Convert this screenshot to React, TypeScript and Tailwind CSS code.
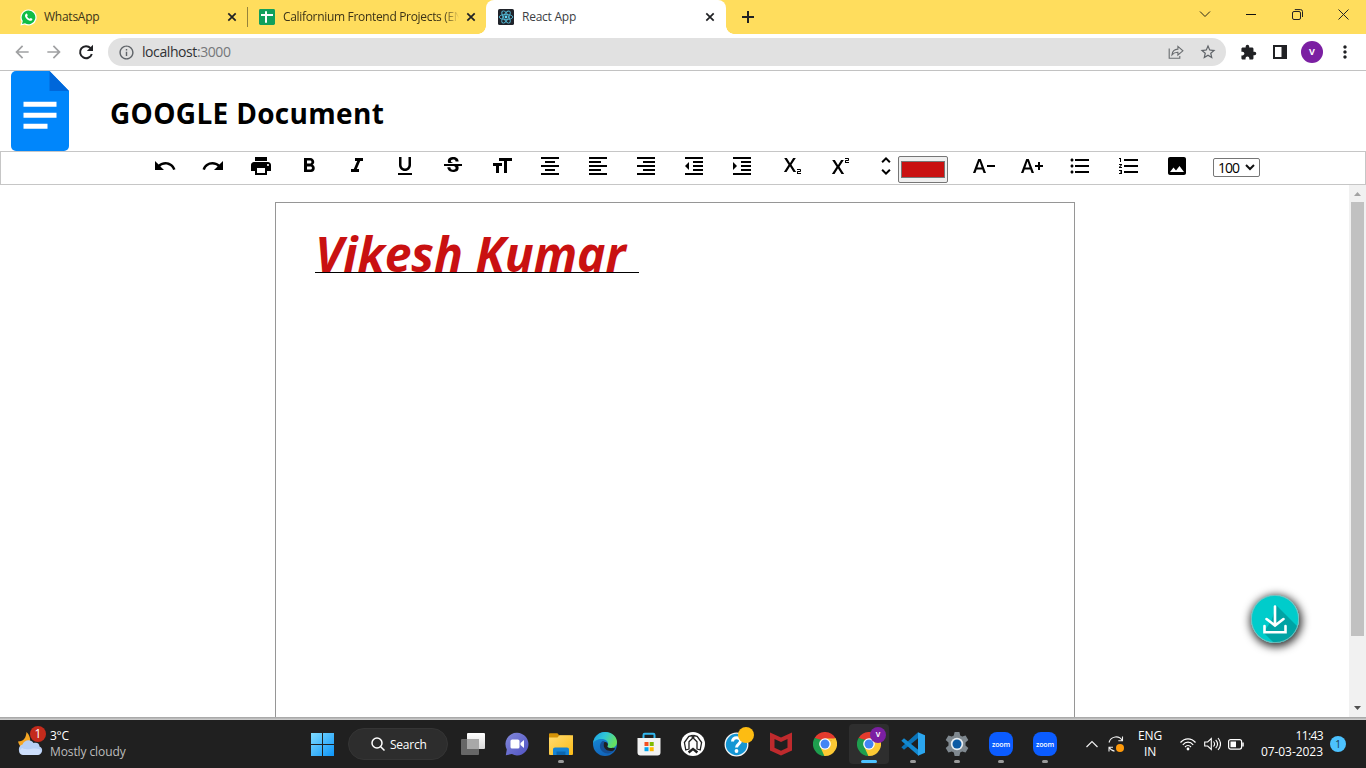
import React from "react";
import {
  MdUndo, MdRedo, MdPrint, MdFormatBold, MdFormatItalic, MdFormatUnderlined, MdStrikethroughS,
  MdFormatSize, MdFormatAlignCenter, MdFormatAlignLeft, MdFormatAlignRight, MdFormatIndentDecrease,
  MdFormatIndentIncrease, MdSubscript, MdSuperscript, MdUnfoldMore, MdTextDecrease, MdTextIncrease,
  MdFormatListBulleted, MdFormatListNumbered, MdImage, MdExtension, MdStarBorder, MdArrowBack,
  MdArrowForward, MdInfoOutline, MdMoreVert,
} from "react-icons/md";

const CloseX = () => (
  <svg width="10" height="10" viewBox="0 0 10 10" className="shrink-0">
    <path d="M1.3 1.3l7.4 7.4M8.7 1.3L1.3 8.7" stroke="#202124" strokeWidth="1.7" />
  </svg>
);

const SheetsIcon = () => (
  <svg width="16" height="16" viewBox="0 0 16 16" className="shrink-0">
    <rect width="16" height="16" rx="1.4" fill="#12a05c" />
    <path d="M2 6h12M7 2.2v11.6" stroke="#fff" strokeWidth="2" />
  </svg>
);

const ReactIcon = () => (
  <svg width="16" height="16" viewBox="0 0 16 16" className="shrink-0">
    <rect width="16" height="16" rx="1.6" fill="#20232a" />
    <g fill="none" stroke="#53b8d4" strokeWidth="0.9">
      <ellipse cx="8" cy="8" rx="6.8" ry="2.6" />
      <ellipse cx="8" cy="8" rx="6.8" ry="2.6" transform="rotate(60 8 8)" />
      <ellipse cx="8" cy="8" rx="6.8" ry="2.6" transform="rotate(120 8 8)" />
    </g>
    <circle cx="8" cy="8" r="1.4" fill="#61dafb" />
  </svg>
);

const WhatsAppIcon = () => (
  <span className="relative flex h-4 w-4 shrink-0 items-center justify-center">
    <svg width="17" height="17" viewBox="0 0 17 17" className="absolute">
      <path d="M8.6 0.4a8 8 0 1 1-3.9 15L0.4 16.6l1.2-4.2A8 8 0 0 1 8.6 0.4z" fill="#fff" />
      <path d="M8.6 1.6a6.8 6.8 0 1 1-3.6 12.6L2 15l.8-2.9A6.8 6.8 0 0 1 8.6 1.6z" fill="#10bd46" />
      <path d="M6 4.8c.5-.5 1-.3 1.2.2l.5 1.2c.1.4-.6.9-.6 1.2.5 1.1 1.4 1.9 2.5 2.4.4 0 .8-.9 1.2-.8l1.4.7c.5.3 0 1.5-.6 1.9-2.4 1.2-6.9-2.5-6.6-5.3.1-.6.5-1.2 1-1.5z" fill="#fff" />
    </svg>
  </span>
);

function BrowserTabs() {
  return (
    <div className="flex h-[34px] bg-[#ffdd5d] text-[12px] text-[#3c3317]">
      <div className="flex w-[247px] items-center pl-5 pr-[10px]">
        <WhatsAppIcon />
        <span className="ml-2 flex-1 whitespace-nowrap tracking-[-0.25px]">WhatsApp</span>
        <CloseX />
      </div>
      <div className="mt-[7px] h-5 w-px bg-[#96833b]" />
      <div className="flex w-[238px] items-center pl-[11px] pr-[10px]">
        <SheetsIcon />
        <span className="ml-2 mr-[3px] flex-1 whitespace-nowrap tracking-[-0.32px] [mask-image:linear-gradient(to_right,#000_89%,transparent_98%)]">
          Californium Frontend Projects (EN
        </span>
        <CloseX />
      </div>
      <div className="relative flex w-[240px] items-center rounded-t-[8px] bg-white pl-3 pr-[11px] text-[#3c4043]">
        <span className="absolute -left-2 bottom-0 h-2 w-2 bg-[radial-gradient(circle_at_0_0,transparent_7.5px,#fff_8px)]" />
        <ReactIcon />
        <span className="ml-2 flex-1 whitespace-nowrap tracking-[-0.25px]">React App</span>
        <CloseX />
        <span className="absolute -right-2 bottom-0 h-2 w-2 bg-[radial-gradient(circle_at_100%_0,transparent_7.5px,#fff_8px)]" />
      </div>
      <div className="flex flex-1 items-center pl-4">
        <svg width="12" height="12" viewBox="0 0 12 12">
          <path d="M6 0v12M0 6h12" stroke="#202124" strokeWidth="2" />
        </svg>
      </div>
      <div className="flex h-[28px] items-center pr-[17px]">
        <svg width="12" height="12" viewBox="0 0 12 12" className="mr-[35px]" fill="none" stroke="#2a2618">
          <path d="M1 3.5l5 5 5-5" />
        </svg>
        <svg width="10" height="12" viewBox="0 0 10 12" className="mr-9" stroke="#111">
          <path d="M0 6.5h10" />
        </svg>
        <svg width="11" height="11" viewBox="0 0 11 11" className="mr-[35px]" fill="none" stroke="#222">
          <rect x="0.5" y="2.5" width="8" height="8" rx="1.5" />
          <path d="M2.8 .6H8.5a2 2 0 0 1 2 2V8" />
        </svg>
        <svg width="11" height="11" viewBox="0 0 11 11" stroke="#222">
          <path d="M.5.5l10 10M10.5.5l-10 10" />
        </svg>
      </div>
    </div>
  );
}

function AddressBar() {
  return (
    <div className="flex h-[37px] items-center border-b border-[#c2c2c2] bg-white pl-3">
      <MdArrowBack size={20} color="#a0a1a3" />
      <MdArrowForward size={20} color="#a0a1a3" className="ml-3" />
      <svg width="20" height="20" viewBox="0 0 20 20" className="ml-3">
        <path d="M14.6 6.2A6 6 0 1 0 15.800 12" fill="none" stroke="#202124" strokeWidth="2" />
        <path d="M17 2.800v6.200h-6.200z" fill="#202124" />
      </svg>
      <div className="ml-3 flex h-7 w-[1118px] items-center rounded-full bg-[#e1e1e1] pl-[10px] pr-[9px]">
        <MdInfoOutline size={17} color="#5f6368" />
        <span className="-mt-px ml-[7px] flex-1 text-[14px] tracking-[-0.42px] text-[#303134]">
          localhost<span className="text-[#75777a]">:3000</span>
        </span>
        <svg width="16" height="16" viewBox="0 0 16 16" fill="none" stroke="#6a6d70" strokeWidth="1.1" className="mr-[15px]">
          <path d="M1.2 4.5v9.8h10.6v-2.2" />
          <path d="M4 10.8C4.4 7 6.4 5.2 9.9 5.1V2.4l5 4.4-5 4.2V8.3C7.4 8.2 5.6 9 4 10.8z" />
        </svg>
        <MdStarBorder size={18} color="#5f6368" />
      </div>
      <MdExtension size={17} color="#202124" className="ml-[14px]" />
      <svg width="14" height="14" viewBox="0 0 14 14" className="ml-4">
        <path d="M1 1h12v12H1z" fill="none" stroke="#202124" strokeWidth="2" />
        <path d="M8.5 0H14v14H8.5z" fill="#202124" />
      </svg>
      <span className="ml-[14px] flex h-[22px] w-[22px] items-center justify-center rounded-full bg-[#7b1fa2] text-[9px] font-bold text-white">
        V
      </span>
      <MdMoreVert size={20} color="#202124" className="ml-[11.5px]" />
    </div>
  );
}

function DocHeader() {
  return (
    <div className="flex h-20 items-center pl-[11px]">
      <svg width="58" height="80" viewBox="0 0 58 80">
        <path d="M5 0h33.5L58 20v55a5 5 0 0 1-5 5H5a5 5 0 0 1-5-5V5a5 5 0 0 1 5-5z" fill="#0086fb" />
        <path d="M38.5 0L58 20H38.5z" fill="#0067da" />
        <path d="M12.5 33.3h33M12.5 44.3h33M12.5 55.3h24" stroke="#fff" strokeWidth="5" />
      </svg>
      <h1 className="ml-[41px] mt-[3px] whitespace-nowrap text-[28px] font-bold leading-9 tracking-[0.32px] text-black">
        GOOGLE Document
      </h1>
    </div>
  );
}

const leftTools = [
  MdUndo, MdRedo, MdPrint, MdFormatBold, MdFormatItalic, MdFormatUnderlined, MdStrikethroughS, MdFormatSize,
  MdFormatAlignCenter, MdFormatAlignLeft, MdFormatAlignRight, MdFormatIndentDecrease, MdFormatIndentIncrease,
  MdSubscript, MdSuperscript,
];
const rightTools = [MdTextDecrease, MdTextIncrease, MdFormatListBulleted, MdFormatListNumbered, MdImage];

function Toolbar() {
  return (
    <div className="flex h-[34px] items-start border border-[#c6c6c6] pl-[152.2px] pt-[2px] text-black">
      <div className="flex gap-[24.06px]">
        {leftTools.map((Icon, i) => (
          <Icon key={i} size={24} />
        ))}
        <MdUnfoldMore size={24} />
      </div>
      <div className="-ml-[0.2px] mt-[2px] h-[27px] w-[50px] rounded-[2px] border border-[#767676] bg-[#efefef] px-[2px] py-1">
        <div className="h-full w-full border border-[#777] bg-[#c91111]" />
      </div>
      <div className="ml-6 flex gap-[24.3px]">
        {rightTools.map((Icon, i) => (
          <Icon key={i} size={24} />
        ))}
      </div>
      <div className="ml-6 mt-1 flex h-[19px] w-[47px] items-center justify-between rounded-[2px] border border-[#767676] pl-[4px] pr-1 font-['Open_Sans'] text-[14px] leading-none text-black">
        <span className="tracking-[-0.9px]">100</span>
        <svg width="10" height="7" viewBox="0 0 10 7" fill="none" stroke="#111" strokeWidth="2">
          <path d="M1 1l4 4 4-4" />
        </svg>
      </div>
    </div>
  );
}

function Editor() {
  return (
    <div className="flex h-[532px] overflow-hidden">
      <div className="relative flex flex-1 pl-[275px] pt-[17px]">
        <div className="h-[600px] w-[800px] border border-[#969696] pl-[39px] pt-[23px]">
          <div className="h-[47px] w-[324px] whitespace-nowrap border-b border-black text-[48px] font-bold italic leading-[55px] tracking-[-0.05px] text-[#c91111]">
            Vikesh Kumar
          </div>
        </div>
        <div className="absolute left-[1251px] top-[410px] h-12 w-12 rounded-full shadow-[1px_2px_8px_2px_rgba(0,0,0,0.8)]">
          <svg width="48" height="48" viewBox="0 0 48 48">
            <defs>
              <clipPath id="disc"><circle cx="24" cy="24" r="24" /></clipPath>
            </defs>
            <g clipPath="url(#disc)">
              <rect width="48" height="48" fill="#00cccb" />
              <path d="M25.500 10.500L50 35v15H25L12.500 37.500l8-12z" fill="#00a3a4" />
            </g>
            <circle cx="24" cy="24" r="23.6" fill="none" stroke="#8bbcbb" strokeWidth=".8" />
            <path d="M24 11.500v18M15.500 24l8.500 6.500 8.500-6.500M13.500 31v6.300h21V31" fill="none" stroke="#fff" strokeWidth="2.600" strokeLinecap="round" />
          </svg>
        </div>
      </div>
      <div className="flex w-[17px] flex-col items-center bg-[#f1f1f1]">
        <svg width="17" height="17" viewBox="0 0 17 17">
          <path d="M5 11l3.5-4 3.5 4z" fill="#a3a3a3" />
        </svg>
        <div className="h-[434px] w-[13px] bg-[#c1c1c1]" />
        <div className="flex-1" />
        <svg width="17" height="17" viewBox="0 0 17 17">
          <path d="M5 6l3.5 4L12 6z" fill="#505050" />
        </svg>
      </div>
    </div>
  );
}

const ChromeLogo = () => (
  <svg width="24" height="24" viewBox="0 0 24 24">
    <path d="M12 12L1.6 6A12 12 0 0 1 22.4 6z" fill="#e33b2e" />
    <path d="M12 12L22.4 6A12 12 0 0 1 12 24z" fill="#fcc934" />
    <path d="M12 12v12A12 12 0 0 1 1.6 6z" fill="#1e9e4e" />
    <path d="M12 6.4h10.6a12 12 0 0 1 .2 .6L17 9z" fill="#fcc934" />
    <path d="M7.2 14.8L12 17.6l4.8-2.8L12 24a12 12 0 0 1-.6 0z" fill="#fcc934" />
    <path d="M1.6 6l5.4 9.2L9 8z" fill="#1e9e4e" />
    <circle cx="12" cy="12" r="5.8" fill="#fff" />
    <circle cx="12" cy="12" r="4.5" fill="#4285f4" />
  </svg>
);

const TaskViewLogo = () => (
  <svg width="24" height="24" viewBox="0 0 24 24">
    <defs><linearGradient id="tv" x2="0" y2="1"><stop stopColor="#fff" /><stop offset="1" stopColor="#d8d8d8" /></linearGradient></defs>
    <rect x="6" y="1" width="18" height="16" rx="1" fill="url(#tv)" />
    <rect x="0" y="7" width="18" height="16" rx="1" fill="#676767" />
    <path d="M6 7h12v10H6z" fill="#a8a8a8" />
  </svg>
);

const ChatLogo = () => (
  <svg width="24" height="24" viewBox="0 0 24 24">
    <defs><linearGradient id="ct" x2="1" y2="1"><stop stopColor="#8389d9" /><stop offset="1" stopColor="#5052c3" /></linearGradient></defs>
    <path d="M12 .8a11.3 11.3 0 1 1-5.1 21.3L.8 23.2l1-5.7A11.3 11.3 0 0 1 12 .8z" fill="url(#ct)" />
    <rect x="5.5" y="7.5" width="9" height="9" rx="1.6" fill="#fff" />
    <path d="M15.5 11l3.5-3v8l-3.5-3z" fill="#fff" />
  </svg>
);

const ExplorerLogo = () => (
  <svg width="24" height="24" viewBox="0 0 24 24">
    <defs><linearGradient id="fe" x2="1" y2="1"><stop stopColor="#ffdc73" /><stop offset="1" stopColor="#fcbb16" /></linearGradient></defs>
    <path d="M0 2.2C0 1.5.6 1.2 1.2 1.2h7.2l2 2.3h11v5H0z" fill="#d49206" />
    <path d="M0 5.5h8.5l2-2.3H24V22a1 1 0 0 1-1 1H1a1 1 0 0 1-1-1z" fill="url(#fe)" />
    <path d="M4 23v-5.500c0-1.300.8-2 2-2h12c1.200 0 2 .7 2 2V23z" fill="#1583d4" />
    <path d="M7.500 19.500h9V23h-9z" fill="#0c66ae" />
  </svg>
);

const EdgeLogo = () => (
  <svg width="24" height="24" viewBox="0 0 24 24">
    <defs>
      <linearGradient id="ea" x2="1" y2=".4"><stop stopColor="#1c9de2" /><stop offset=".5" stopColor="#2fc6d8" /><stop offset="1" stopColor="#65e162" /></linearGradient>
      <linearGradient id="eb" x2=".3" y2="1"><stop stopColor="#1791dc" /><stop offset="1" stopColor="#1267bc" /></linearGradient>
    </defs>
    <circle cx="12" cy="12" r="12" fill="url(#eb)" />
    <path d="M0 11.500C1 4.500 6 0 12 0c7 0 12 4.700 12 10 0 4-3 6-6 6-2.500 0-4.200-1-3.500-2 1.500-2 .5-5.500-3-6.500C7 6.200 1.500 8 0 11.500z" fill="url(#ea)" />
    <path d="M9 9.500c-3.500 3-2.600 9.500 3 11.500 3.500 1.200 7 0 9.500-3 .5-.5 0-1-.6-.7-4.500 2-9.500.2-10-4.300-.1-1.400.4-2.500 1-3.400-.8-.7-2-.8-2.900-.1z" fill="#164f94" />
    <path d="M11.200 10.200c1.600-.7 3.600.3 3.700 2.200 0 1-.8 1.500-.6 2.100.6 1.300 3.200 2 5.200 1.300l3 .7-2.500 2.200c-4.700 1.200-8.600-1-9.200-4.600-.2-1.500-.1-2.700.4-3.900z" fill="#202020" />
  </svg>
);

const StoreLogo = () => (
  <svg width="24" height="24" viewBox="0 0 24 24">
    <path d="M6.500 7V3c0-.8.500-1.200 1.200-1.200h8.600c.7 0 1.200.4 1.200 1.200v4" fill="none" stroke="#32b7ee" strokeWidth="2" />
    <path d="M.5 6h23v14.500a3 3 0 0 1-3 3h-17a3 3 0 0 1-3-3z" fill="#f2f2f2" />
    <path d="M7.500 10h4v4h-4z" fill="#f25022" /><path d="M12.700 10h4v4h-4z" fill="#7fba00" />
    <path d="M7.500 15.200h4v4h-4z" fill="#00a4ef" /><path d="M12.700 15.200h4v4h-4z" fill="#ffb900" />
  </svg>
);

const ArchLogo = () => (
  <svg width="24" height="24" viewBox="0 0 24 24">
    <circle cx="12" cy="12" r="12" fill="#fff" />
    <path d="M4.800 18L3.400 10.500 7.800 4.300 11.300 3.500v3L8 9.800V17zM19.200 18l1.400-7.500-4.400-6.200-3.500-.8v3L16 9.800V17z" fill="none" stroke="#202020" strokeWidth="1.300" strokeLinejoin="round" />
    <path d="M6.800 19.500L12 15.500l5.200 4-1.600 1.900L12 18.600l-3.600 2.800z" fill="#202020" />
  </svg>
);

const HelpLogo = () => (
  <svg width="28" height="28" viewBox="0 0 28 28" className="overflow-visible">
    <circle cx="13.500" cy="14.500" r="11.300" fill="#1596d4" stroke="#f5f5f5" strokeWidth="1.300" />
    <path d="M9.500 11.500c0-5 8-5 8-.4 0 3-4 3.200-4 6.400" fill="none" stroke="#fff" strokeWidth="3" />
    <circle cx="13.500" cy="21" r="1.900" fill="#fff" />
    <circle cx="23" cy="5" r="8" fill="#fdbc12" />
  </svg>
);

const McAfeeLogo = () => (
  <svg width="24" height="24" viewBox="0 0 24 24">
    <path d="M1 .5l11 5 11-5v18l-11 5-11-5zM5.500 7v8.800l6.500 3 6.500-3V7L12 10z" fill="#bf2a2d" fillRule="evenodd" />
  </svg>
);

const CodeLogo = () => (
  <svg width="24" height="24" viewBox="0 0 24 24">
    <path d="M17 0.300v6L3 17.800 0.300 15.300z" fill="#0a73b8" />
    <path d="M3 6.200L17.500 18v5.700L.3 8.700z" fill="#1389d0" />
    <path d="M17 .2l7 3v17.600l-7 3z" fill="#2ba6ef" />
  </svg>
);

const SettingsLogo = () => (
  <svg width="24" height="24" viewBox="0 0 24 24">
    <path d="M9.600 0h4.800l.8 3.500 2 1.100 3.400-1 2.700 4.300L20.500 10.500v3l2.800 2.600-2.700 4.300-3.400-1-2 1.100-.8 3.500H9.600l-.8-3.500-2-1.100-3.400 1L.7 16.100l2.800-2.600v-3L.7 7.900l2.700-4.300 3.400 1 2-1.100z" fill="#7f888f" />
    <circle cx="12" cy="12" r="6.200" fill="#e8edf1" />
    <circle cx="12" cy="12" r="4.500" fill="#0d5ba4" />
  </svg>
);

const ZoomLogo = () => (
  <span className="flex h-6 w-6 items-center justify-center rounded-[8px] bg-[#0b5cff] text-[7px] font-semibold leading-none tracking-[-0.2px] text-white">
    zoom
  </span>
);

const ActiveChrome = () => (
  <span className="relative block">
    <ChromeLogo />
    <span className="absolute -right-[5px] -top-[5px] flex h-4 w-4 items-center justify-center rounded-full bg-[#7b1fa2] text-[7px] font-bold text-white">
      V
    </span>
  </span>
);

const apps = [
  { Logo: TaskViewLogo, state: "none" },
  { Logo: ChatLogo, state: "none" },
  { Logo: ExplorerLogo, state: "open" },
  { Logo: EdgeLogo, state: "none" },
  { Logo: StoreLogo, state: "none" },
  { Logo: ArchLogo, state: "none" },
  { Logo: HelpLogo, state: "none" },
  { Logo: McAfeeLogo, state: "none" },
  { Logo: ChromeLogo, state: "none" },
  { Logo: ActiveChrome, state: "active" },
  { Logo: CodeLogo, state: "open" },
  { Logo: SettingsLogo, state: "open" },
  { Logo: ZoomLogo, state: "open" },
  { Logo: ZoomLogo, state: "open" },
];

function Taskbar() {
  return (
    <div className="flex h-12 items-center bg-[#202020] text-[12px] leading-4 text-white">
      <div className="flex w-[311px] items-center pl-[18px]">
        <div className="relative h-[30px] w-8">
          <svg width="28" height="30" viewBox="1 0 28 30">
            <path d="M1 12.500c6 0 8-4 8.500-9.500 3 3 5.500 8 2 14L6 19.500c-3-1.500-4-4-5-7z" fill="#f5a623" />
            <path d="M6 26a5.500 5.500 0 0 1-.5-10.500C7 10.500 14 9.500 16.500 14c4-1 6 1 6 3.500 4 1 3.500 8-1.500 8.500z" fill="#b6cff5" />
            <path d="M5 19c5 3 11-1 17 1 3 1 2 6-1.500 6H6c-4 0-5-4-1-7z" fill="#dce8ff" opacity=".65" />
          </svg>
          <span className="absolute left-[12px] top-[-3px] flex h-4 w-4 items-center justify-center rounded-full bg-[#c42b1c] text-[12px]">1</span>
        </div>
        <div className="whitespace-nowrap">
          <div className="tracking-[-0.3px]">3°C</div>
          <div className="tracking-[-0.1px] text-[#bdbdbd]">Mostly cloudy</div>
        </div>
      </div>
      <svg width="23" height="23" viewBox="0 0 23 23">
        <defs><linearGradient id="win" x2="23" y2="23" gradientUnits="userSpaceOnUse"><stop stopColor="#80dcff" /><stop offset="1" stopColor="#0d95f8" /></linearGradient></defs>
        <path d="M0 0h11v11H0zM12 0h11v11H12zM0 12h11v11H0zM12 12h11v11H12z" fill="url(#win)" />
      </svg>
      <div className="ml-[14px] mr-[3px] flex h-8 w-[100px] items-center rounded-full border border-[#353535] bg-[#2d2d2d] pl-[22px]">
        <svg width="14" height="14" viewBox="0 0 14 14" fill="none" stroke="#fff" strokeWidth="1.500">
          <circle cx="6" cy="6" r="5" />
          <path d="M9.700 9.700l3.800 3.800" />
        </svg>
        <span className="ml-[5px] mt-px tracking-[-0.25px]">Search</span>
      </div>
      <div className="flex">
        {apps.map(({ Logo, state }, i) => (
          <div key={i} className="flex h-12 w-11 items-center justify-center">
            <div className={state === "active" ? "relative flex h-10 w-10 items-center justify-center rounded bg-[#2e2e2e]" : "relative flex h-10 w-10 items-center justify-center"}>
              <Logo />
              {state === "active" && <span className="absolute bottom-[1px] h-[3px] w-4 rounded-full bg-[#4cc2ff]" />}
              {state === "open" && <span className="absolute bottom-[1px] h-[3px] w-[6px] rounded-full bg-[#9a9a9a]" />}
            </div>
          </div>
        ))}
      </div>
      <div className="flex flex-1 items-center pl-[19px]">
        <svg width="12" height="8" viewBox="0 0 12 8" fill="none" stroke="#eee" strokeWidth="1.200">
          <path d="M.5 7L6 1.500 11.500 7" />
        </svg>
        <svg width="18" height="18" viewBox="0 0 18 18" className="ml-[9px]" fill="none" stroke="#eee" strokeWidth="1.100">
          <path d="M2 7.500C4 1 12 0 15.200 5.500M15.500 1.500v4.200h-4.200M2 16.500v-4.200h4M2 12.300c1.200 2.200 3 3.500 5.500 3.800" />
          <circle cx="13" cy="13" r="4" fill="#ff9a0a" stroke="none" />
        </svg>
        <div className="ml-[13px] w-6 whitespace-nowrap text-center tracking-[-0.2px]">
          <div>ENG</div>
          <div>IN</div>
        </div>
        <svg width="16" height="14" viewBox="0 0 16 14" className="ml-[18px]" fill="none" stroke="#fff" strokeWidth="1.200">
          <path d="M.5 5.500c4.300-4.800 10.700-4.800 15 0M2.800 7.800c3-3.500 7.400-3.500 10.400 0M5 10c1.800-2 4.200-2 6 0" />
          <circle cx="8" cy="12" r="1.400" fill="#fff" stroke="none" />
        </svg>
        <svg width="17" height="14" viewBox="0 0 17 14" className="ml-2" fill="none" stroke="#fff" strokeWidth="1.100">
          <path d="M.7 5h3l3.600-3.500v11L3.700 9h-3zM9.500 4.500c1.300 1.500 1.300 3.500 0 5M11.700 2.800c2.300 2.600 2.300 5.800 0 8.400M14 1c3.200 3.800 3.200 8.200 0 12" />
        </svg>
        <svg width="17" height="11" viewBox="0 0 17 11" className="ml-[7px]">
          <rect x=".6" y=".6" width="13" height="9.500" rx="2" fill="none" stroke="#fff" strokeWidth="1.200" />
          <path d="M2.500 2.500h5.500v5.700H2.500z" fill="#fff" />
          <path d="M15 3.500v4" stroke="#fff" strokeWidth="1.500" />
        </svg>
        <div className="ml-auto mr-[7px] whitespace-nowrap text-right">
          <div className="tracking-[-0.6px]">11:43</div>
          <div className="tracking-[-0.05px]">07-03-2023</div>
        </div>
        <span className="mr-5 flex h-4 w-4 items-center justify-center rounded-full bg-[#4cc2ff] text-[10px] text-[#16384b]">1</span>
      </div>
    </div>
  );
}

export default function App() {
  return (
    <div className="h-[768px] w-[1366px] overflow-hidden bg-white font-['Open_Sans','Noto_Sans',sans-serif]">
      <BrowserTabs />
      <AddressBar />
      <DocHeader />
      <Toolbar />
      <Editor />
      <div className="h-[3px] bg-gradient-to-b from-[#a2a2a2] to-[#d2d2d2]" />
      <Taskbar />
    </div>
  );
}
